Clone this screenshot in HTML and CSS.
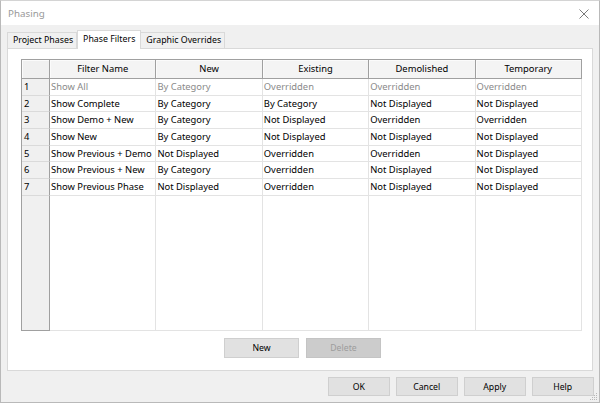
FILE: index.html
```html
<!DOCTYPE html>
<html lang="en">
<head>
<meta charset="utf-8">
<title>Phasing</title>
<link rel="stylesheet" href="styles.css">
</head>
<body>
<div class="window">
  <div class="titlebar">
    <span class="title">Phasing</span>
    <svg class="close" width="10" height="10" viewBox="0 0 10 10"><path d="M0.5 0.5 L9.5 9.5 M9.5 0.5 L0.5 9.5" stroke="#7a7a7a" stroke-width="1" fill="none"/></svg>
  </div>
  <div class="content">
    <div class="tabs">
      <div class="tab">Project Phases</div>
      <div class="tab selected">Phase Filters</div>
      <div class="tab">Graphic Overrides</div>
    </div>
    <div class="panel">
      <div class="grid">
        <div class="corner"></div>
        <div class="colhead">Filter Name</div>
        <div class="colhead">New</div>
        <div class="colhead">Existing</div>
        <div class="colhead">Demolished</div>
        <div class="colhead">Temporary</div>

        <div class="rowhead">1</div>
        <div class="cell dim">Show All</div>
        <div class="cell dim">By Category</div>
        <div class="cell dim">Overridden</div>
        <div class="cell dim">Overridden</div>
        <div class="cell dim">Overridden</div>

        <div class="rowhead">2</div>
        <div class="cell">Show Complete</div>
        <div class="cell">By Category</div>
        <div class="cell">By Category</div>
        <div class="cell">Not Displayed</div>
        <div class="cell">Not Displayed</div>

        <div class="rowhead">3</div>
        <div class="cell">Show Demo + New</div>
        <div class="cell">By Category</div>
        <div class="cell">Not Displayed</div>
        <div class="cell">Overridden</div>
        <div class="cell">Overridden</div>

        <div class="rowhead">4</div>
        <div class="cell">Show New</div>
        <div class="cell">By Category</div>
        <div class="cell">Not Displayed</div>
        <div class="cell">Not Displayed</div>
        <div class="cell">Not Displayed</div>

        <div class="rowhead">5</div>
        <div class="cell">Show Previous + Demo</div>
        <div class="cell">Not Displayed</div>
        <div class="cell">Overridden</div>
        <div class="cell">Overridden</div>
        <div class="cell">Not Displayed</div>

        <div class="rowhead">6</div>
        <div class="cell">Show Previous + New</div>
        <div class="cell">By Category</div>
        <div class="cell">Overridden</div>
        <div class="cell">Not Displayed</div>
        <div class="cell">Not Displayed</div>

        <div class="rowhead">7</div>
        <div class="cell">Show Previous Phase</div>
        <div class="cell">Not Displayed</div>
        <div class="cell">Overridden</div>
        <div class="cell">Not Displayed</div>
        <div class="cell">Not Displayed</div>

        <div class="rowhead filler"></div>
        <div class="cell"></div>
        <div class="cell"></div>
        <div class="cell"></div>
        <div class="cell"></div>
        <div class="cell"></div>
      </div>
      <div class="panel-buttons">
        <button class="btn">New</button>
        <button class="btn disabled">Delete</button>
      </div>
    </div>
    <div class="footer">
      <button class="btn foot">OK</button>
      <button class="btn foot">Cancel</button>
      <button class="btn foot">Apply</button>
      <button class="btn foot">Help</button>
    </div>
  </div>
  <svg class="grip" width="8" height="8" viewBox="0 0 8 8"><g fill="#b8b8b8"><rect x="6" y="0" width="1" height="1"/><rect x="4" y="2" width="1" height="1"/><rect x="6" y="2" width="1" height="1"/><rect x="2" y="4" width="1" height="1"/><rect x="4" y="4" width="1" height="1"/><rect x="6" y="4" width="1" height="1"/><rect x="0" y="6" width="1" height="1"/><rect x="2" y="6" width="1" height="1"/><rect x="4" y="6" width="1" height="1"/><rect x="6" y="6" width="1" height="1"/></g></svg>
</div>
</body>
</html>
```

FILE: styles.css
```css
* { box-sizing: border-box; }
html, body { margin: 0; padding: 0; }
body {
  width: 600px;
  height: 404px;
  overflow: hidden;
  font-family: "Noto Sans", "Liberation Sans", sans-serif;
  font-size: 9.4px;
  color: #000;
  background: #fff;
}
.window {
  position: relative;
  width: 600px;
  height: 403px;
  border: 1px solid #b9b9b9;
  border-top-color: #d4d4d4;
  background: #f0f0f0;
  display: flex;
  flex-direction: column;
}
.titlebar {
  height: 24px;
  background: #fff;
  display: flex;
  align-items: center;
  justify-content: space-between;
  padding: 0 10px 0 7px;
  flex-shrink: 0;
}
.title { color: #999; font-size: 9.8px; }
.close { display: block; margin-top: 1px; }
.content {
  flex: 1;
  display: flex;
  flex-direction: column;
  padding: 5px 5px 0 6px;
}
.tabs {
  display: flex;
  align-items: flex-end;
  height: 18px;
  font-size: 8.8px;
}
.tab {
  height: 16px;
  border: 1px solid #d9d9d9;
  border-bottom: none;
  background: #f0f0f0;
  padding: 0 3px 0 5px;
  line-height: 15px;
  white-space: nowrap;
}
.tab + .tab { border-left: none; }
.tab.selected {
  position: relative;
  z-index: 1;
  height: 19px;
  margin-bottom: -1px;
  background: #fff;
  border-left: 1px solid #d9d9d9;
  padding: 0 5px 0 5px;
  line-height: 16px;
}
.tab.selected + .tab { border-left: none; }
.panel {
  height: 323px;
  margin-right: 1px;
  background: #fff;
  border: 1px solid #d9d9d9;
  padding: 10px 10px 0 13px;
  display: flex;
  flex-direction: column;
}
.grid {
  height: 272px;
  display: grid;
  grid-template-columns: 28px repeat(5, 1fr);
  grid-template-rows: 19px repeat(7, 16.7px) 1fr;
  border-left: 1px solid #a0a0a0;
  border-top: 1px solid #a0a0a0;
}
.corner, .colhead {
  background: #f0f0f0;
  border-right: 1px solid #a0a0a0;
  border-bottom: 1px solid #a0a0a0;
  box-shadow: inset 1px 1px 0 #fbfbfb;
}
.colhead {
  text-align: center;
  line-height: 18px;
  background: #f4f4f4;
}
.rowhead {
  background: #f0f0f0;
  border-right: 1px solid #a0a0a0;
  border-bottom: 1px solid #dadada;
  padding-left: 2px;
  line-height: 15.5px;
}
.rowhead.filler { border-bottom-color: #a0a0a0; }
.cell {
  border-right: 1px solid #e3e3e3;
  border-bottom: 1px solid #e3e3e3;
  padding-left: 1px;
  line-height: 15.5px;
  white-space: nowrap;
  overflow: hidden;
}
.cell.dim { color: #8a8a8a; }
.panel-buttons {
  display: flex;
  justify-content: center;
  gap: 7px;
  margin-top: 7px;
  padding-left: 2px;
}
.btn {
  font-family: inherit;
  font-size: 8.7px;
  color: #000;
  background: #e1e1e1;
  border: 1px solid #cfcfcf;
  width: 75px;
  height: 20px;
  padding: 0;
  line-height: 17px;
}
.btn.disabled {
  background: #cccccc;
  border-color: #c4c4c4;
  color: #9c9c9c;
}
.footer {
  display: flex;
  justify-content: flex-end;
  gap: 5.5px;
  margin-top: 6px;
}
.btn.foot {
  width: 62.5px;
  height: 19px;
  line-height: 16px;
}
.grip {
  position: absolute;
  right: 1px;
  bottom: 1px;
}
```
